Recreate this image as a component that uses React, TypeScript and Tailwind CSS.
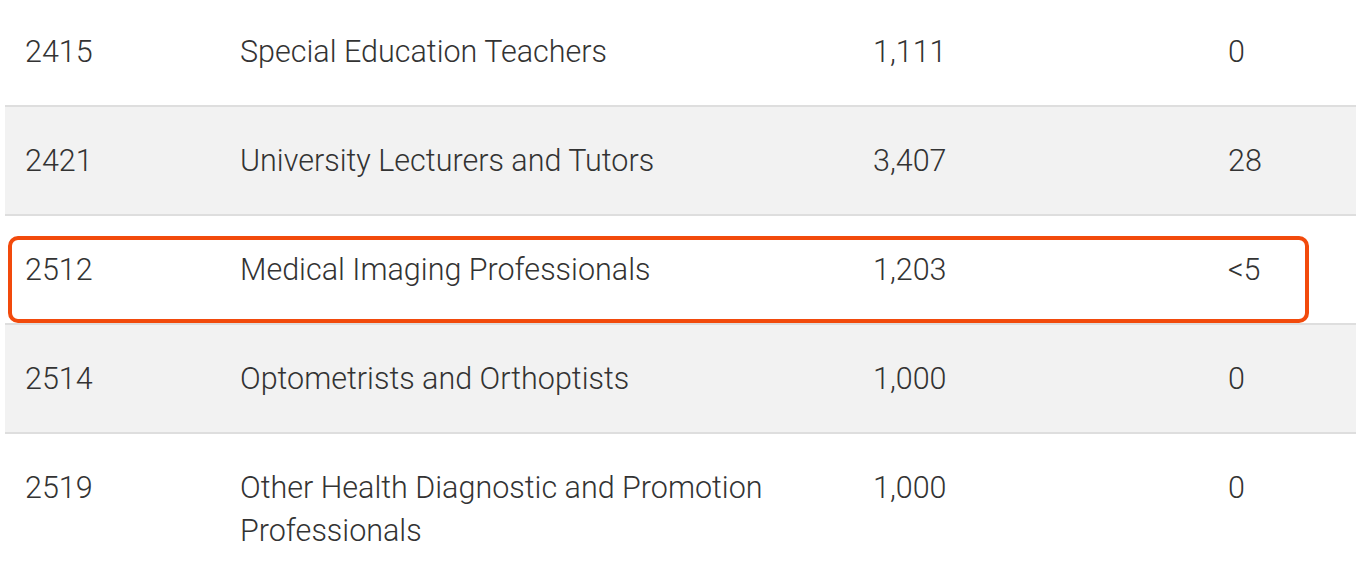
import React from "react";

const rows = [
  { code: "2415", name: "Special Education Teachers", a: "1,111", b: "0" },
  { code: "2421", name: "University Lecturers and Tutors", a: "3,407", b: "28" },
  { code: "2512", name: "Medical Imaging Professionals", a: "1,203", b: "<5", hl: true },
  { code: "2514", name: "Optometrists and Orthoptists", a: "1,000", b: "0" },
  { code: "2519", name: "Other Health Diagnostic and Promotion Professionals", a: "1,000", b: "0" },
];

export default function App() {
  return (
    <div
      className="w-[1356px] h-[572px] overflow-hidden bg-white pl-[5px] text-[#333333]"
      style={{ fontFamily: "Roboto, 'Liberation Sans', sans-serif" }}
    >
      <div className="-mt-[2px]">
        {rows.map((r, i) => (
          <div
            key={r.code}
            className={`relative grid grid-cols-[215px_633px_355px_1fr] border-b-2 border-[#dedede] py-8 pl-5 text-[30.5px] font-light leading-[43px] ${
              i % 2 === 1 ? "bg-[#f2f2f2]" : "bg-white"
            }`}
          >
            <div>{r.code}</div>
            <div className="max-w-[560px]">{r.name}</div>
            <div>{r.a}</div>
            <div>{r.b}</div>
            {r.hl && (
              <div className="pointer-events-none absolute left-[3px] top-[20px] h-[87px] w-[1301px] rounded-[10px] border-4 border-[#f24a0c]" />
            )}
          </div>
        ))}
      </div>
    </div>
  );
}
